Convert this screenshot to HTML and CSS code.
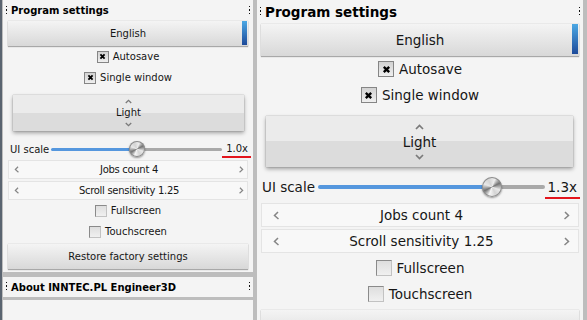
FILE: index.html
```html
<!DOCTYPE html>
<html lang="en">
<head>
    <meta charset="UTF-8">
    <meta name="viewport" content="width=device-width, initial-scale=1.0">
    <title>Program settings</title>
    <link rel="stylesheet" href="styles.css">
</head>
<body>
    <div class="desktop">
        <!-- UI scale 1.0x -->
        <div class="column">
            <section class="panel">
                <div class="panel-title">
                    <span class="grip"></span>
                    <span class="title-text">Program settings</span>
                    <span class="grip"></span>
                </div>
                <button class="btn lang-btn">English</button>
                <label class="check-row">
                    <span class="check"><svg viewBox="0 0 10 10"><path d="M2 2L8 8M8 2L2 8"/></svg></span>Autosave
                </label>
                <label class="check-row">
                    <span class="check"><svg viewBox="0 0 10 10"><path d="M2 2L8 8M8 2L2 8"/></svg></span>Single window
                </label>
                <div class="theme-spin">
                    <svg class="chev" viewBox="0 0 9 6"><polyline points="1,5 4.5,1.5 8,5"/></svg>
                    <span>Light</span>
                    <svg class="chev" viewBox="0 0 9 6"><polyline points="1,1 4.5,4.5 8,1"/></svg>
                </div>
                <div class="scale-row">
                    <span>UI scale</span>
                    <div class="track" style="--pos: 50%"><span class="knob"></span></div>
                    <span class="scale-value">1.0x</span>
                </div>
                <div class="spins">
                    <div class="spin">
                        <svg class="spin-arrow" viewBox="0 0 6 9"><polyline points="5,1 1.5,4.5 5.5,8"/></svg>
                        <span>Jobs count 4</span>
                        <svg class="spin-arrow" viewBox="0 0 6 9"><polyline points="1,1 4.5,4.5 0.5,8"/></svg>
                    </div>
                    <div class="spin">
                        <svg class="spin-arrow" viewBox="0 0 6 9"><polyline points="5,1 1.5,4.5 5.5,8"/></svg>
                        <span>Scroll sensitivity 1.25</span>
                        <svg class="spin-arrow" viewBox="0 0 6 9"><polyline points="1,1 4.5,4.5 0.5,8"/></svg>
                    </div>
                </div>
                <label class="check-row"><span class="check off"></span>Fullscreen</label>
                <label class="check-row"><span class="check off"></span>Touchscreen</label>
                <button class="btn restore">Restore factory settings</button>
            </section>
            <section class="panel about">
                <div class="panel-title">
                    <span class="grip"></span>
                    <span class="title-text">About INNTEC.PL Engineer3D</span>
                    <span class="grip"></span>
                </div>
            </section>
            <section class="panel rest"></section>
        </div>

        <!-- UI scale 1.3x -->
        <div class="column large">
            <section class="panel">
                <div class="panel-title">
                    <span class="grip"></span>
                    <span class="title-text">Program settings</span>
                    <span class="grip"></span>
                </div>
                <button class="btn lang-btn">English</button>
                <label class="check-row">
                    <span class="check"><svg viewBox="0 0 10 10"><path d="M2 2L8 8M8 2L2 8"/></svg></span>Autosave
                </label>
                <label class="check-row">
                    <span class="check"><svg viewBox="0 0 10 10"><path d="M2 2L8 8M8 2L2 8"/></svg></span>Single window
                </label>
                <div class="theme-spin">
                    <svg class="chev" viewBox="0 0 9 6"><polyline points="1,5 4.5,1.5 8,5"/></svg>
                    <span>Light</span>
                    <svg class="chev" viewBox="0 0 9 6"><polyline points="1,1 4.5,4.5 8,1"/></svg>
                </div>
                <div class="scale-row">
                    <span>UI scale</span>
                    <div class="track" style="--pos: 77%"><span class="knob"></span></div>
                    <span class="scale-value">1.3x</span>
                </div>
                <div class="spins">
                    <div class="spin">
                        <svg class="spin-arrow" viewBox="0 0 6 9"><polyline points="5,1 1.5,4.5 5.5,8"/></svg>
                        <span>Jobs count 4</span>
                        <svg class="spin-arrow" viewBox="0 0 6 9"><polyline points="1,1 4.5,4.5 0.5,8"/></svg>
                    </div>
                    <div class="spin">
                        <svg class="spin-arrow" viewBox="0 0 6 9"><polyline points="5,1 1.5,4.5 5.5,8"/></svg>
                        <span>Scroll sensitivity 1.25</span>
                        <svg class="spin-arrow" viewBox="0 0 6 9"><polyline points="1,1 4.5,4.5 0.5,8"/></svg>
                    </div>
                </div>
                <label class="check-row"><span class="check off"></span>Fullscreen</label>
                <label class="check-row"><span class="check off"></span>Touchscreen</label>
                <button class="btn restore">Restore factory settings</button>
            </section>
        </div>
    </div>
</body>
</html>
```

FILE: styles.css
```css
html, body {
    margin: 0;
    height: 100%;
}
body {
    font-family: "DejaVu Sans", Verdana, sans-serif;
    color: #161616;
    background-color: #bdbdbd;
    overflow: hidden;
}
.desktop {
    display: flex;
    gap: 4px;
    height: 320px;
    padding-left: 1px;
    border-left: 2px solid #5a6470;
    box-sizing: border-box;
}
.column {
    display: flex;
    flex-direction: column;
    flex-shrink: 0;
    width: 250px;
}
.column.large {
    width: 326px;
}
.panel {
    background-color: #f4f4f4;
    padding: 0 5px 3px;
    font-size: 10px;
}
.panel.about {
    margin-top: 5px;
    padding-bottom: 0;
}
.panel.about .panel-title {
    height: 20px;
}
.panel.rest {
    flex: 1;
    margin-top: 3px;
}
.panel-title {
    display: flex;
    align-items: center;
    height: 21px;
    margin: 0 -3px 0 -2px;
    font-weight: bold;
    color: #000;
}
.grip {
    width: 2px;
    height: 10px;
    background: repeating-linear-gradient(#111 0 1.4px, transparent 1.4px 3.3px);
    background-size: 1.4px 100%;
    background-repeat: no-repeat;
}
.title-text {
    flex: 1;
    margin-left: 3px;
}

/* buttons */
.btn {
    display: block;
    width: 100%;
    height: 25px;
    padding: 0;
    border: none;
    font: inherit;
    color: inherit;
    background: linear-gradient(#f4f4f4, #d8d8d8);
    box-shadow: 0 1px 1px rgba(0,0,0,0.28), 0 0 1px rgba(0,0,0,0.25);
}
.lang-btn {
    background:
        linear-gradient(#4ca8e4, #1d4a9a) right 1px top 0 / 5px 24px no-repeat,
        linear-gradient(#f4f4f4, #d8d8d8);
}
.restore {
    margin-top: 2px;
}

/* checkboxes */
.check-row {
    display: flex;
    justify-content: center;
    align-items: center;
    gap: 4px;
    height: 21px;
}
.check {
    display: flex;
    justify-content: center;
    align-items: center;
    width: 12px;
    height: 12px;
    box-sizing: border-box;
    border: 1px solid #858585;
    background: linear-gradient(#d2d2d2, #efefef);
}
.check svg {
    width: 7px;
    height: 7px;
    stroke: #000;
    stroke-width: 2.6;
}
.check.off {
    border-color: #8a8a8a #c2c2c2 #c2c2c2 #8a8a8a;
    background: linear-gradient(#dedede, #f0f0f0);
}

/* theme selector */
.theme-spin {
    display: flex;
    flex-direction: column;
    justify-content: center;
    align-items: center;
    gap: 4px;
    height: 36px;
    margin: 7px 4px 0 5px;
    line-height: 10px;
    background: linear-gradient(#ebebeb 50%, #dcdcdc 50%);
    box-shadow: 0 2px 4px rgba(0,0,0,0.35), 0 0 1px rgba(0,0,0,0.35);
}
.chev {
    width: 7px;
    height: 5px;
    fill: none;
    stroke: #7a7a7a;
    stroke-width: 1.7;
}

/* ui scale slider */
.scale-row {
    display: flex;
    align-items: center;
    height: 22px;
    margin: 7px -3px 0 0;
    padding-left: 2px;
}
.track {
    position: relative;
    flex: 1;
    height: 3px;
    margin-left: 2px;
    border-radius: 2px;
    background: linear-gradient(to right, #5597de var(--pos), #a9a9a9 var(--pos));
}
.knob {
    position: absolute;
    left: var(--pos);
    top: 50%;
    width: 16px;
    height: 16px;
    margin: -8px 0 0 -8px;
    border-radius: 50%;
    background: conic-gradient(from 20deg, #ededed, #737373 12%, #e8e8e8 25%, #d4d4d4 37%, #f6f6f6 50%, #737373 62%, #e8e8e8 75%, #d4d4d4 87%, #ededed);
    box-shadow: inset 0 0 0 1px #8c8c8c, 0 1px 2px rgba(0,0,0,0.4);
}
.scale-value {
    margin-top: 3px;
    padding: 0 3px 1px 4px;
    line-height: 12px;
    border-bottom: 2px solid #e3141c;
}

/* value spinners */
.spins {
    display: flex;
    flex-direction: column;
    gap: 2px;
}
.spin {
    display: flex;
    justify-content: space-between;
    align-items: center;
    height: 19px;
    box-sizing: border-box;
    padding: 0 3px 0 5px;
    background-color: #f8f8f8;
    border: 1px solid #e4e4e4;
    letter-spacing: -0.3px;
}
.spin-arrow {
    width: 5px;
    height: 7px;
    fill: none;
    stroke: #858585;
    stroke-width: 1.5;
}

/* 1.3x variant */
.large .panel {
    padding: 0 4px 3px;
    font-size: 13.5px;
}
.large .panel-title {
    height: 24px;
    margin: 0 -2px 0 -1px;
}
.large .btn {
    height: 32px;
}
.large .lang-btn {
    background-size: 6px 30px, auto;
}
.large .restore {
    margin-top: 3px;
}
.large .check-row {
    gap: 5px;
    height: 26px;
}
.large .check {
    width: 16px;
    height: 16px;
}
.large .check svg {
    width: 9px;
    height: 9px;
}
.large .theme-spin {
    gap: 5px;
    height: 51px;
    margin: 8px 6px 0 5px;
    line-height: 14px;
}
.large .chev {
    width: 9px;
    height: 6px;
}
.large .scale-row {
    height: 24px;
    margin: 8px -1px 0 0;
    padding-left: 1px;
}
.large .track {
    height: 4px;
    margin-left: 3px;
}
.large .knob {
    width: 20px;
    height: 20px;
    margin: -10px 0 0 -10px;
}
.large .scale-value {
    margin-top: 4px;
    padding: 0 3px 2px;
    line-height: 16px;
}
.large .spins {
    margin: 4px 0 2px;
}
.large .spin {
    height: 24px;
    padding: 0 8px 0 11px;
    letter-spacing: 0;
}
.large .spin-arrow {
    width: 6px;
    height: 9px;
}
```
